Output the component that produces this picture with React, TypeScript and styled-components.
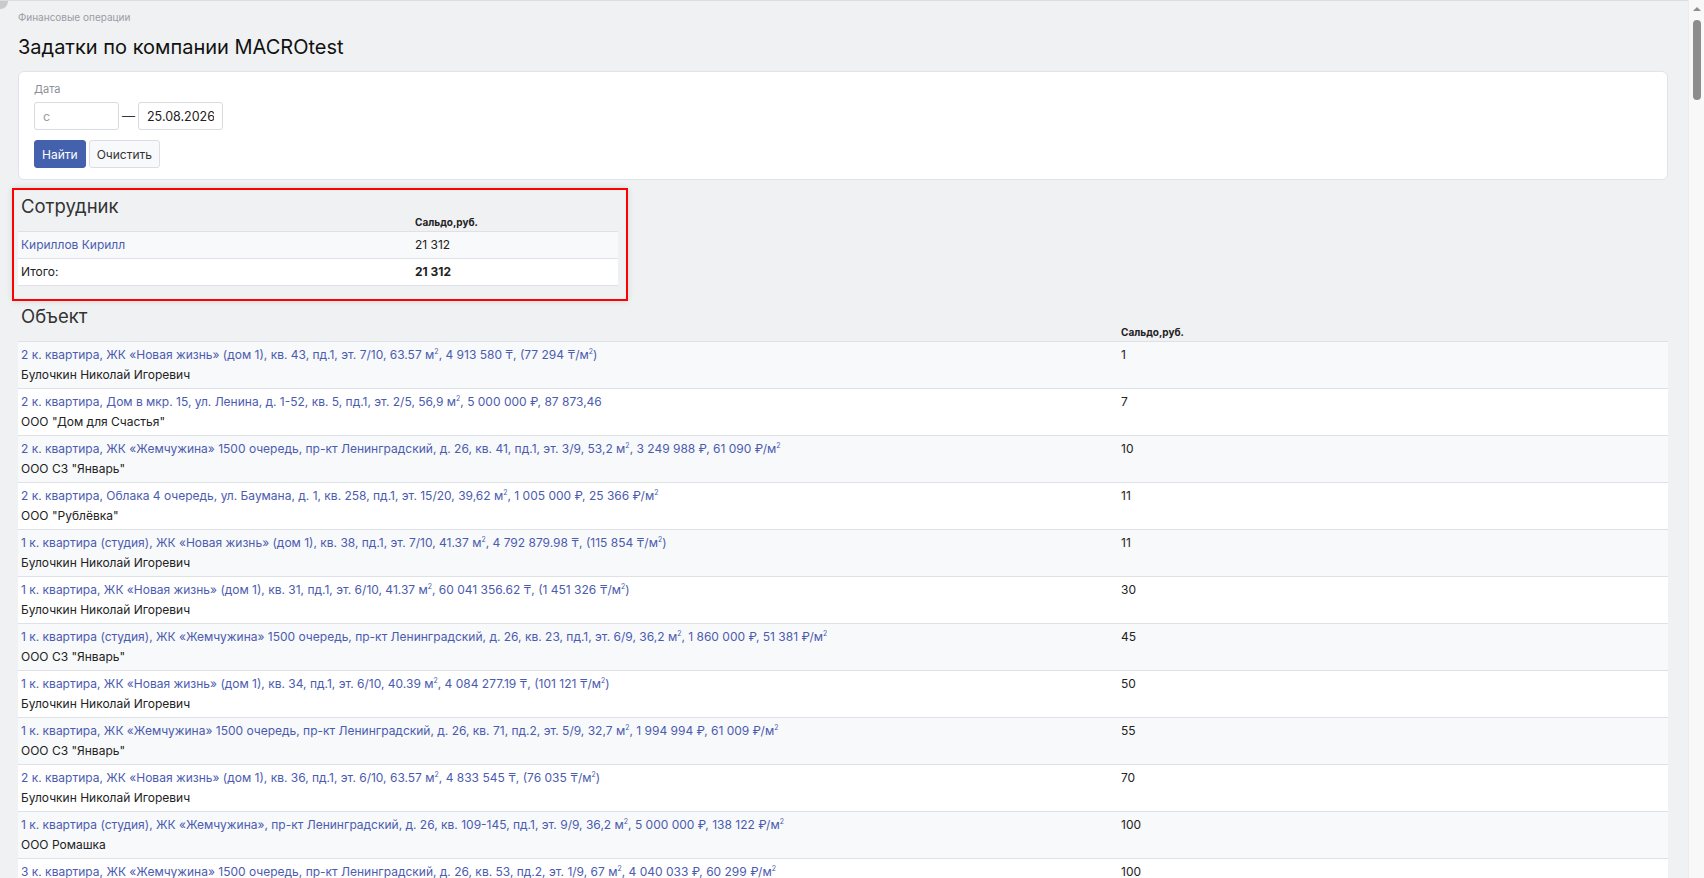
import React from "react";
import styled, { createGlobalStyle } from "styled-components";

const Global = createGlobalStyle`
  html, body { margin: 0; padding: 0; background: #f0f1f3; }
  body { font-family: Inter, "Noto Sans", sans-serif; color: #222; }
  * { box-sizing: border-box; }
`;

const Shell = styled.div`
  display: flex;
  height: 100vh;
  overflow: hidden;
`;

const Page = styled.main`
  position: relative;
  flex: 1;
  min-width: 0;
  border-top: 1px solid #dcdde0;
  padding: 8px 20px 24px 18px;
  overflow: hidden;
`;

const ScrollTrack = styled.aside`
  width: 16px;
  flex: 0 0 16px;
  background: #f8f8f8;
  border-left: 1px solid #ececec;
  display: flex;
  flex-direction: column;
  align-items: center;
  padding-top: 7px;
`;

const ScrollArrow = styled.div`
  width: 0;
  height: 0;
  border-left: 4px solid transparent;
  border-right: 4px solid transparent;
  border-bottom: 4px solid #8d8d8d;
`;

const ScrollThumb = styled.div`
  margin-top: 9px;
  width: 8px;
  height: 80px;
  border-radius: 4px;
  background: #8d8d8d;
`;

const CornerDot = styled.div`
  position: absolute;
  left: -7px;
  top: -7px;
  width: 15px;
  height: 15px;
  border-radius: 50%;
  background: #c9cacd;
`;

const Breadcrumb = styled.div`
  font-size: 10px;
  color: #9a9ca3;
  line-height: 16px;
`;

const Title = styled.h1`
  margin: 9px 0 11px 0;
  font-size: 20px;
  font-weight: 400;
  line-height: 26px;
  color: #111;
`;

const Card = styled.div`
  background: #fff;
  border: 1px solid #e1e3e8;
  border-radius: 6px;
  padding: 10px 15px 11px 15px;
`;

const Label = styled.div`
  font-size: 11px;
  color: #8c8f96;
  line-height: 14px;
  margin-bottom: 6px;
`;

const DateRow = styled.div`
  display: flex;
  align-items: center;
  gap: 3px;
`;

const DateInput = styled.input`
  width: 85px;
  height: 28px;
  border: 1px solid #d9dbe0;
  border-radius: 3px;
  padding: 0 8px;
  font-family: inherit;
  font-size: 12.5px;
  color: #222;
  background: #fff;
  outline: none;
  &::placeholder { color: #9a9ca3; }
`;

const Dash = styled.span`
  font-size: 13px;
  color: #333;
`;

const Buttons = styled.div`
  display: flex;
  gap: 3px;
  margin-top: 10px;
`;

const Button = styled.button<{ $primary?: boolean }>`
  height: 28px;
  padding: 0 7px;
  border-radius: 3px;
  font-family: inherit;
  font-size: 12px;
  border: 1px solid ${(p) => (p.$primary ? "#4361ad" : "#dcdee3")};
  background: ${(p) => (p.$primary ? "#4361ad" : "#f8f9fa")};
  color: ${(p) => (p.$primary ? "#fff" : "#333")};
  cursor: pointer;
`;

const Highlight = styled.div`
  margin: 8px 0 0 -6px;
  width: 616px;
  border: 2px solid #f00;
  padding: 7px 8px 13px 4px;
  box-shadow: 0 0 6px rgba(0, 0, 0, 0.12);
`;

const SectionTitle = styled.h4`
  margin: 0;
  padding-left: 3px;
  font-size: 18.5px;
  font-weight: 400;
  line-height: 18px;
  color: #333;
`;

const Section = styled.div`
  margin-top: 6px;
`;

const Table = styled.table`
  width: 100%;
  border-collapse: collapse;
  font-size: 12px;
  table-layout: fixed;
`;

const HeadCell = styled.th<{ $w?: string }>`
  text-align: left;
  font-size: 10px;
  font-weight: 700;
  color: #222;
  padding: 1px 3px 3px 3px;
  line-height: 12px;
  width: ${(p) => p.$w || "auto"};
  border-bottom: 1px solid #dee2e6;
`;

const Row = styled.tr<{ $odd?: boolean }>`
  background: ${(p) => (p.$odd ? "#f8f9fa" : "#fff")};
  border-bottom: 1px solid #dee2e6;
`;

const Cell = styled.td<{ $bold?: boolean }>`
  padding: 3px 3px;
  line-height: 20px;
  vertical-align: top;
  color: #222;
  font-weight: ${(p) => (p.$bold ? 700 : 400)};
  white-space: nowrap;
`;

const Link = styled.a`
  color: #4b5cb0;
  text-decoration: none;
  display: block;
  sup { font-size: 7px; line-height: 0; }
`;

const Owner = styled.div`
  color: #222;
`;

type Obj = { t: string; o: string; v: string };

const renderText = (t: string) => {
  const parts = t.split("м²");
  return parts.map((p, i) => (
    <React.Fragment key={i}>
      {p}
      {i < parts.length - 1 && (
        <>
          м<sup>2</sup>
        </>
      )}
    </React.Fragment>
  ));
};

const objects: Obj[] = [
  { t: "2 к. квартира, ЖК «Новая жизнь» (дом 1), кв. 43, пд.1, эт. 7/10, 63.57 м², 4 913 580 ₸, (77 294 ₸/м²)", o: "Булочкин Николай Игоревич", v: "1" },
  { t: "2 к. квартира, Дом в мкр. 15, ул. Ленина, д. 1-52, кв. 5, пд.1, эт. 2/5, 56,9 м², 5 000 000 ₽, 87 873,46", o: 'ООО "Дом для Счастья"', v: "7" },
  { t: "2 к. квартира, ЖК «Жемчужина» 1500 очередь, пр-кт Ленинградский, д. 26, кв. 41, пд.1, эт. 3/9, 53,2 м², 3 249 988 ₽, 61 090 ₽/м²", o: 'ООО СЗ "Январь"', v: "10" },
  { t: "2 к. квартира, Облака 4 очередь, ул. Баумана, д. 1, кв. 258, пд.1, эт. 15/20, 39,62 м², 1 005 000 ₽, 25 366 ₽/м²", o: 'ООО "Рублёвка"', v: "11" },
  { t: "1 к. квартира (студия), ЖК «Новая жизнь» (дом 1), кв. 38, пд.1, эт. 7/10, 41.37 м², 4 792 879.98 ₸, (115 854 ₸/м²)", o: "Булочкин Николай Игоревич", v: "11" },
  { t: "1 к. квартира, ЖК «Новая жизнь» (дом 1), кв. 31, пд.1, эт. 6/10, 41.37 м², 60 041 356.62 ₸, (1 451 326 ₸/м²)", o: "Булочкин Николай Игоревич", v: "30" },
  { t: "1 к. квартира (студия), ЖК «Жемчужина» 1500 очередь, пр-кт Ленинградский, д. 26, кв. 23, пд.1, эт. 6/9, 36,2 м², 1 860 000 ₽, 51 381 ₽/м²", o: 'ООО СЗ "Январь"', v: "45" },
  { t: "1 к. квартира, ЖК «Новая жизнь» (дом 1), кв. 34, пд.1, эт. 6/10, 40.39 м², 4 084 277.19 ₸, (101 121 ₸/м²)", o: "Булочкин Николай Игоревич", v: "50" },
  { t: "1 к. квартира, ЖК «Жемчужина» 1500 очередь, пр-кт Ленинградский, д. 26, кв. 71, пд.2, эт. 5/9, 32,7 м², 1 994 994 ₽, 61 009 ₽/м²", o: 'ООО СЗ "Январь"', v: "55" },
  { t: "2 к. квартира, ЖК «Новая жизнь» (дом 1), кв. 36, пд.1, эт. 6/10, 63.57 м², 4 833 545 ₸, (76 035 ₸/м²)", o: "Булочкин Николай Игоревич", v: "70" },
  { t: "1 к. квартира (студия), ЖК «Жемчужина», пр-кт Ленинградский, д. 26, кв. 109-145, пд.1, эт. 9/9, 36,2 м², 5 000 000 ₽, 138 122 ₽/м²", o: "ООО Ромашка", v: "100" },
  { t: "3 к. квартира, ЖК «Жемчужина» 1500 очередь, пр-кт Ленинградский, д. 26, кв. 53, пд.2, эт. 1/9, 67 м², 4 040 033 ₽, 60 299 ₽/м²", o: 'ООО СЗ "Январь"', v: "100" },
];

export default function App() {
  return (
    <>
      <Global />
      <Shell>
        <Page>
          <CornerDot />
          <Breadcrumb>Финансовые операции</Breadcrumb>
          <Title>Задатки по компании MACROtest</Title>
          <Card>
            <Label>Дата</Label>
            <DateRow>
              <DateInput placeholder="с" />
              <Dash>—</Dash>
              <DateInput defaultValue="25.08.2026" />
            </DateRow>
            <Buttons>
              <Button $primary>Найти</Button>
              <Button>Очистить</Button>
            </Buttons>
          </Card>

          <Highlight>
            <SectionTitle>Сотрудник</SectionTitle>
            <Table>
              <thead>
                <tr>
                  <HeadCell $w="394px"></HeadCell>
                  <HeadCell>Сальдо,руб.</HeadCell>
                </tr>
              </thead>
              <tbody>
                <Row $odd>
                  <Cell><Link href="#">Кириллов Кирилл</Link></Cell>
                  <Cell>21 312</Cell>
                </Row>
                <Row>
                  <Cell>Итого:</Cell>
                  <Cell $bold>21 312</Cell>
                </Row>
              </tbody>
            </Table>
          </Highlight>

          <Section>
            <SectionTitle>Объект</SectionTitle>
            <Table>
              <thead>
                <tr>
                  <HeadCell $w="1100px"></HeadCell>
                  <HeadCell>Сальдо,руб.</HeadCell>
                </tr>
              </thead>
              <tbody>
                {objects.map((r, i) => (
                  <Row key={i} $odd={i % 2 === 0}>
                    <Cell>
                      <Link href="#">{renderText(r.t)}</Link>
                      <Owner>{r.o}</Owner>
                    </Cell>
                    <Cell>{r.v}</Cell>
                  </Row>
                ))}
              </tbody>
            </Table>
          </Section>
        </Page>
        <ScrollTrack>
          <ScrollArrow />
          <ScrollThumb />
        </ScrollTrack>
      </Shell>
    </>
  );
}
